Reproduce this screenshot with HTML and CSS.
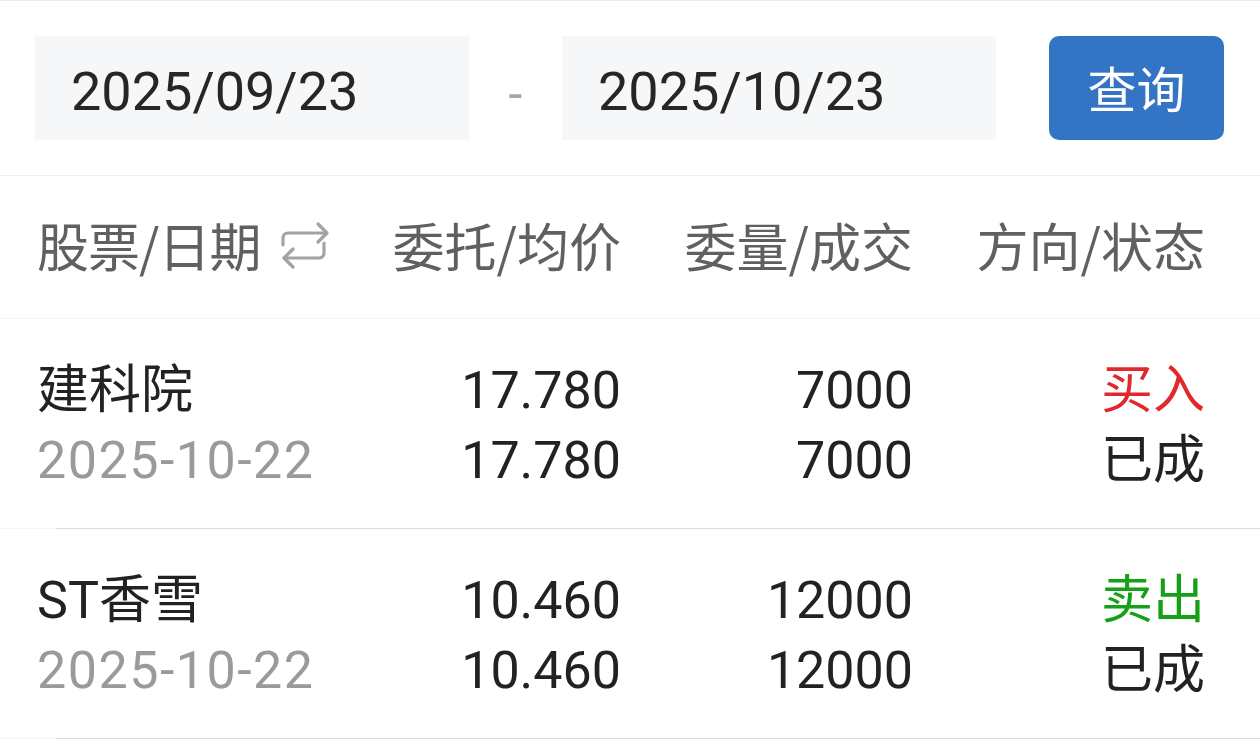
FILE: index.html
```html
<!DOCTYPE html>
<html lang="zh-CN">
<head>
<meta charset="utf-8">
<link rel="stylesheet" href="styles.css">
</head>
<body>
<div class="page">
  <div class="filter">
    <div class="date-box">2025/09/23</div>
    <div class="dash">-</div>
    <div class="date-box">2025/10/23</div>
    <button class="query-btn">查询</button>
  </div>
  <div class="grid head">
    <div class="cell left head-first">
      <span class="head-label">股票/日期</span>
      <svg class="swap" width="50" height="50" viewBox="0 0 50 50">
        <path d="M3 25 V18 a5 5 0 0 1 5 -5 H46" />
        <path d="M38 4 L47 13 L38 22" />
        <path d="M44 23 V33 a5 5 0 0 1 -5 5 H4" />
        <path d="M13 29 L4 38 L13 47" />
      </svg>
    </div>
    <div class="cell">委托/均价</div>
    <div class="cell">委量/成交</div>
    <div class="cell">方向/状态</div>
  </div>
  <div class="grid row">
    <div class="cell left"><div class="main">建科院</div><div class="sub">2025-10-22</div></div>
    <div class="cell"><div class="main">17.780</div><div class="main">17.780</div></div>
    <div class="cell"><div class="main">7000</div><div class="main">7000</div></div>
    <div class="cell"><div class="buy">买入</div><div class="main">已成</div></div>
  </div>
  <div class="grid row">
    <div class="cell left"><div class="main">ST香雪</div><div class="sub">2025-10-22</div></div>
    <div class="cell"><div class="main">10.460</div><div class="main">10.460</div></div>
    <div class="cell"><div class="main">12000</div><div class="main">12000</div></div>
    <div class="cell"><div class="sell">卖出</div><div class="main">已成</div></div>
  </div>
</div>
</body>
</html>
```

FILE: styles.css
```css
* { box-sizing: border-box; }
html, body { margin: 0; padding: 0; background: #fff; }
body {
  font-family: Roboto, "Noto Sans CJK SC", sans-serif;
  color: #222;
}
.page { width: 1260px; }

.filter {
  display: flex;
  align-items: center;
  border-top: 1px solid #ececec;
  border-bottom: 1px solid #efefef;
  padding: 35px 35px 35px 35px;
}
.date-box {
  width: 434px;
  height: 104px;
  background: #f5f7f9;
  display: flex;
  align-items: center;
  padding: 6px 0 0 36px;
  font-size: 54px;
  color: #262626;
}
.dash {
  width: 93px;
  text-align: center;
  font-size: 50px;
  color: #a6a6a6;
  padding-top: 12px;
}
.query-btn {
  margin-left: 53px;
  width: 175px;
  height: 104px;
  border: none;
  border-radius: 10px;
  background: #3474c4;
  color: #fff;
  font-family: "Noto Sans CJK SC", sans-serif;
  font-size: 49px;
  padding: 0 0 4px 0;
}

.grid {
  display: grid;
  grid-template-columns: repeat(4, 292px);
  padding: 0 55px 0 37px;
}
.head {
  height: 143px;
  align-items: center;
  border-bottom: 1px solid #f6f6f6;
  color: #606060;
  font-family: "Noto Sans CJK SC", sans-serif;
  font-size: 52px;
  white-space: nowrap;
  padding-bottom: 6px;
}
.cell { text-align: right; }
.cell.left { text-align: left; }
.head-first {
  display: flex;
  align-items: center;
  gap: 20px;
}
.head-label { flex-shrink: 0; letter-spacing: -1px; }
.swap {
  flex-shrink: 0;
  fill: none;
  stroke: #a3a3a3;
  stroke-width: 3.2;
  stroke-linecap: round;
  stroke-linejoin: round;
  margin-top: 2px;
}

.row {
  height: 210px;
  padding-top: 37px;
  font-size: 52px;
  line-height: 70px;
  background:
    linear-gradient(#dcdcdc, #dcdcdc) right bottom / calc(100% - 56px) 1px no-repeat,
    linear-gradient(#f4f4f4, #f4f4f4) left bottom / 100% 1px no-repeat;
}
.main { color: #222; }
.sub { color: #9a9a9a; letter-spacing: 1.5px; }
.buy { color: #e0282d; }
.sell { color: #15a015; }
```
